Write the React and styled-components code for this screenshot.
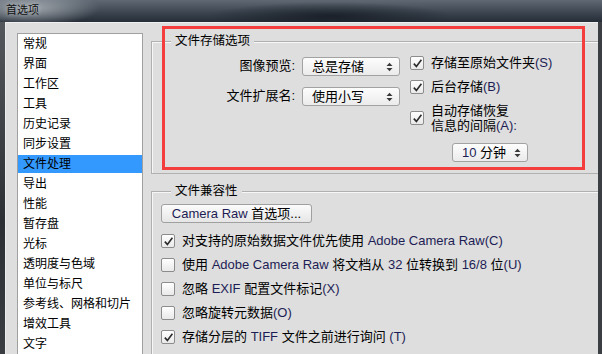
import styled, { createGlobalStyle } from 'styled-components';

const GlobalStyle = createGlobalStyle`
  html, body {
    margin: 0;
    padding: 0;
  }
  body {
    width: 602px;
    height: 354px;
    overflow: hidden;
    background: #2f3842;
    font-family: "Liberation Sans", "Noto Sans CJK SC", sans-serif;
    font-size: 12px;
    line-height: 16px;
    color: #000;
  }
  * { box-sizing: border-box; }
`;

const Window = styled.div`
  width: 602px;
  height: 354px;
  display: flex;
  flex-direction: column;
  overflow: hidden;
`;

const TitleBar = styled.div`
  height: 22px;
  flex: none;
  display: flex;
  align-items: center;
  padding: 0 0 2px 6px;
  font-size: 11px;
  color: #111;
  text-shadow: 0 0 5px rgba(210, 215, 220, 0.7);
  background:
    radial-gradient(ellipse 70px 18px at 30px 8px, rgba(170, 176, 182, 0.9), rgba(170, 176, 182, 0)),
    radial-gradient(ellipse 120px 14px at 330px 16px, rgba(20, 26, 34, 0.8), rgba(20, 26, 34, 0)),
    linear-gradient(180deg, #5f6873 0%, #3a434e 60%, #252d37 100%);
`;

const Frame = styled.div`
  flex: 1;
  display: flex;
  min-height: 0;
`;

const EdgeLeft = styled.div`
  width: 5px;
  flex: none;
  background: linear-gradient(180deg, #55585c, #2c2f33 60%, #3a3d41);
`;

const EdgeRight = styled.div`
  width: 4px;
  flex: none;
  background: #3b3e42;
`;

const Body = styled.div`
  flex: 1;
  min-width: 0;
  position: relative;
  display: flex;
  align-items: flex-start;
  gap: 8px;
  padding: 10px 0 0 11px;
  background: #dedede;
  border-top: 1px solid #f0f0f0;
  border-left: 1px solid #ececec;
  overflow: hidden;
`;

const List = styled.div`
  width: 126px;
  flex: none;
  height: 340px;
  padding-top: 1px;
  background: #fff;
  border: 1px solid #a0a0a0;
`;

const ListItem = styled.div`
  height: 18px;
  line-height: 18px;
  margin-bottom: 2px;
  padding-left: 5px;
  white-space: nowrap;
  background: ${p => (p.$active ? '#3399ff' : 'transparent')};
`;

const Panel = styled.div`
  flex: 1;
  min-width: 0;
  display: flex;
  flex-direction: column;
  padding-top: 8px;
  font-size: 13px;
`;

const Group = styled.section`
  margin-top: ${p => p.$gap || 0}px;
  border-top: 1px solid #b0b0b0;
  border-left: 1px solid #b0b0b0;
  border-bottom: ${p => (p.$open ? 'none' : '1px solid #b0b0b0')};
  box-shadow: inset 1px 1px 0 #f7f7f7;
  min-height: ${p => (p.$open ? '200px' : 'auto')};
`;

const GroupTitle = styled.div`
  width: max-content;
  margin: -8px 0 0 19px;
  padding: 0 4px;
  height: 14px;
  line-height: 14px;
  font-size: 12.5px;
  background: #dedede;
`;

const StoreInner = styled.div`
  display: flex;
  align-items: flex-start;
  padding: 9px 0 11px 0;
`;

const FieldGrid = styled.div`
  display: grid;
  grid-template-columns: 143px 98px;
  grid-auto-rows: 18px;
  column-gap: 7px;
  row-gap: 12px;
`;

const FieldLabel = styled.div`
  text-align: right;
  line-height: 18px;
  white-space: nowrap;
`;

const SelectBox = styled.div`
  width: ${p => p.$w || 98}px;
  height: 19px;
  display: flex;
  align-items: center;
  justify-content: space-between;
  padding: 0 6px 0 9px;
  border: 1px solid #a2a2a2;
  border-radius: 3px;
  background: linear-gradient(180deg, #fdfdfd, #ebebeb);
  white-space: nowrap;
`;

const CheckColumn = styled.div`
  display: flex;
  flex-direction: column;
  gap: 8px;
  margin: -2px 0 0 10px;
`;

const CheckRow = styled.div`
  display: flex;
  align-items: center;
  gap: 7px;
  height: ${p => p.$h || 16}px;
  white-space: nowrap;
`;

const Lines = styled.div`
  line-height: 15px;
`;

const Box = styled.span`
  width: 14px;
  height: 14px;
  flex: none;
  display: flex;
  align-items: center;
  justify-content: center;
  border: 1px solid #8c8c8c;
  border-radius: 2px;
  background: linear-gradient(180deg, #ffffff, #e9e9e9);
`;

const Latin = styled.span`
  color: #1d1d55;
`;

const IntervalSelect = styled.div`
  margin: 2px 0 0 42px;
`;

const CompatInner = styled.div`
  display: flex;
  flex-direction: column;
  align-items: flex-start;
  padding: 6px 0 0 9px;
`;

const Button = styled.div`
  width: 151px;
  height: 19px;
  display: flex;
  align-items: center;
  justify-content: center;
  margin-bottom: 6px;
  border: 1px solid #a0a0a0;
  border-radius: 3px;
  background: linear-gradient(180deg, #fbfbfb, #e6e6e6);
  white-space: nowrap;
`;

const Highlight = styled.div`
  position: absolute;
  left: 156px;
  top: 3px;
  width: 423px;
  height: 144px;
  border: 3px solid #f43d3d;
  pointer-events: none;
`;

const Arrows = () => (
  <svg width="7" height="10" viewBox="0 0 7 10">
    <path d="M0.5 4 L3.5 0.8 L6.5 4 Z" fill="#3a3a3a" />
    <path d="M0.5 6 L3.5 9.2 L6.5 6 Z" fill="#3a3a3a" />
  </svg>
);

const Checkbox = ({ checked }) => (
  <Box>
    {checked && (
      <svg width="11" height="11" viewBox="0 0 11 11">
        <path d="M1.8 5.6 L4.4 8.4 L9.4 1.8" fill="none" stroke="#2b2b2b" strokeWidth="1.6" />
      </svg>
    )}
  </Box>
);

const Select = ({ value, w }) => (
  <SelectBox $w={w}>
    <span>{value}</span>
    <Arrows />
  </SelectBox>
);

const sections = [
  '常规', '界面', '工作区', '工具', '历史记录', '同步设置', '文件处理', '导出', '性能',
  '暂存盘', '光标', '透明度与色域', '单位与标尺', '参考线、网格和切片', '增效工具', '文字',
];

const compat = [
  { checked: true, label: <>对支持的原始数据文件优先使用 <Latin>Adobe Camera Raw(C)</Latin></> },
  { checked: false, label: <>使用 <Latin>Adobe Camera Raw</Latin> 将文档从 <Latin>32</Latin> 位转换到 <Latin>16/8</Latin> 位<Latin>(U)</Latin></> },
  { checked: false, label: <>忽略 <Latin>EXIF</Latin> 配置文件标记<Latin>(X)</Latin></> },
  { checked: false, label: <>忽略旋转元数据<Latin>(O)</Latin></> },
  { checked: true, label: <>存储分层的 <Latin>TIFF</Latin> 文件之前进行询问 <Latin>(T)</Latin></> },
];

export default function App() {
  return (
    <>
      <GlobalStyle />
      <Window>
        <TitleBar>首选项</TitleBar>
        <Frame>
          <EdgeLeft />
          <Body>
            <List>
              {sections.map(s => (
                <ListItem key={s} $active={s === '文件处理'}>{s}</ListItem>
              ))}
            </List>
            <Panel>
              <Group>
                <GroupTitle>文件存储选项</GroupTitle>
                <StoreInner>
                  <FieldGrid>
                    <FieldLabel>图像预览:</FieldLabel>
                    <Select value="总是存储" />
                    <FieldLabel>文件扩展名:</FieldLabel>
                    <Select value="使用小写" />
                  </FieldGrid>
                  <CheckColumn>
                    <CheckRow>
                      <Checkbox checked />
                      <span>存储至原始文件夹<Latin>(S)</Latin></span>
                    </CheckRow>
                    <CheckRow>
                      <Checkbox checked />
                      <span>后台存储<Latin>(B)</Latin></span>
                    </CheckRow>
                    <CheckRow $h={30}>
                      <Checkbox checked />
                      <Lines>
                        <div>自动存储恢复</div>
                        <div>信息的间隔<Latin>(A):</Latin></div>
                      </Lines>
                    </CheckRow>
                    <IntervalSelect>
                      <Select value={<><Latin>10</Latin> 分钟</>} w={76} />
                    </IntervalSelect>
                  </CheckColumn>
                </StoreInner>
              </Group>
              <Group $gap={17} $open>
                <GroupTitle>文件兼容性</GroupTitle>
                <CompatInner>
                  <Button><Latin>Camera Raw</Latin>&nbsp;首选项...</Button>
                  {compat.map((c, i) => (
                    <CheckRow key={i} $h={24}>
                      <Checkbox checked={c.checked} />
                      <span>{c.label}</span>
                    </CheckRow>
                  ))}
                </CompatInner>
              </Group>
            </Panel>
            <Highlight />
          </Body>
          <EdgeRight />
        </Frame>
      </Window>
    </>
  );
}
